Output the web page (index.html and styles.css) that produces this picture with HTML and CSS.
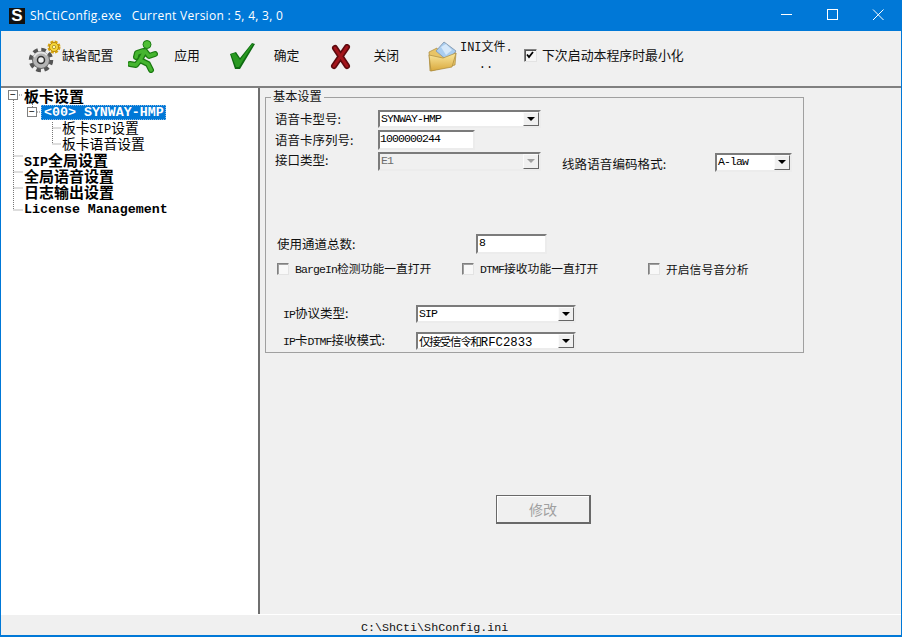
FILE: index.html
```html
<!DOCTYPE html>
<html lang="zh">
<head>
<meta charset="utf-8">
<title>ShCtiConfig.exe</title>
<link rel="stylesheet" href="styles.css">
</head>
<body>
<div class="window">
  <header class="titlebar">
    <span class="app-icon">S</span>
    <span class="title">ShCtiConfig.exe &nbsp;&nbsp;Current Version : 5, 4, 3, 0</span>
    <span class="controls">
      <svg class="ctl" width="46" height="31" viewBox="0 0 46 31"><path d="M17 14.500h11" stroke="#fff" fill="none"/></svg>
      <svg class="ctl" width="46" height="31" viewBox="0 0 46 31"><rect x="17.500" y="9.500" width="10" height="10" stroke="#fff" fill="none"/></svg>
      <svg class="ctl" width="46" height="31" viewBox="0 0 46 31"><path d="M17 9.500l10.500 10.500M27.500 9.500L17 20" stroke="#fff" fill="none"/></svg>
    </span>
  </header>

  <div class="toolbar">
    <div class="tool tool-default">
      <svg width="34" height="34" viewBox="0 0 34 34" class="icon">
        <circle cx="14" cy="20" r="10" fill="none" stroke="#555" stroke-width="4.500" stroke-dasharray="4.500 3.350"/>
        <circle cx="14" cy="20" r="8.500" fill="#b4b4b4" stroke="#666"/>
        <path d="M7 17a8 8 0 0 1 13-2" fill="none" stroke="#e4e4e4" stroke-width="2"/>
        <circle cx="14" cy="20" r="3.500" fill="#f0f0f0" stroke="#333" stroke-width="1.500"/>
        <circle cx="27" cy="7" r="5" fill="none" stroke="#d7a40e" stroke-width="3" stroke-dasharray="2.700 1.230"/>
        <circle cx="27" cy="7" r="4.500" fill="#f6d73a" stroke="#b8860b"/>
        <circle cx="27" cy="7" r="1.700" fill="#fff5b0" stroke="#8a6a00" stroke-width=".6"/>
      </svg>
      <span class="tool-label">缺省配置</span>
    </div>
    <div class="tool tool-apply">
      <svg width="31" height="33" viewBox="0 0 31 33" class="icon">
        <g fill="none" stroke="#1b7a12" stroke-width="6" stroke-linecap="round" stroke-linejoin="round">
          <path d="M17 11l-5 9 8 4 3 6M12 20l-4 5-6-1M15 11l-6 2-1 4M17 11l4 5 6-2"/>
        </g>
        <g fill="none" stroke="#45b52f" stroke-width="3.500" stroke-linecap="round" stroke-linejoin="round">
          <path d="M17 11l-5 9 8 4 3 6M12 20l-4 5-6-1M15 11l-6 2-1 4M17 11l4 5 6-2"/>
        </g>
        <circle cx="19" cy="4.500" r="4" fill="#4fbf35" stroke="#1b7a12"/>
      </svg>
      <span class="tool-label">应用</span>
    </div>
    <div class="tool tool-ok">
      <svg width="26" height="27" viewBox="0 0 26 27" class="icon">
        <path d="M0 11l6-2 4 6L22 0l3 1L10 26H5z" fill="#0f6b12"/>
        <path d="M1 11l4-1 5 7L22 1l1 .5L9 24H6z" fill="#2a9a22"/>
      </svg>
      <span class="tool-label">确定</span>
    </div>
    <div class="tool tool-close">
      <svg width="22" height="26" viewBox="0 0 22 26" class="icon">
        <path d="M5 4l12 18M17 3L4 22" fill="none" stroke="#5d0a0e" stroke-width="6" stroke-linecap="round"/>
        <path d="M5 4l12 18M17 3L4 22" fill="none" stroke="#a3141b" stroke-width="3" stroke-linecap="round"/>
      </svg>
      <span class="tool-label">关闭</span>
    </div>
    <div class="tool tool-ini">
      <svg width="29" height="31" viewBox="0 0 29 31" class="icon">
        <defs>
          <linearGradient id="flap" x1="0" y1="0" x2="0" y2="1"><stop offset="0" stop-color="#fbe9a0"/><stop offset="1" stop-color="#d9a83c"/></linearGradient>
        </defs>
        <path d="M1 11l8-4 1 3 18 2-1 12-25 6z" fill="#e8c466" stroke="#a98a3c" stroke-width=".7"/>
        <path d="M8 10L16 1l12 9-8 10z" fill="#a9cdf0" stroke="#8a9fb5"/>
        <path d="M13 6l5-3 6 6-6 5z" fill="#d5e8fa"/>
        <path d="M1 14l14 3 13-5-4 14L3 30z" fill="url(#flap)" stroke="#a98a3c" stroke-width=".7"/>
      </svg>
      <span class="tool-label ini-label">INI文件.<br>..</span>
    </div>
    <div class="tool-check">
      <span class="check checked"><svg width="8" height="8" viewBox="0 0 8 8"><path d="M1 3.500l2 2.500 4-5" fill="none" stroke="#000" stroke-width="1.800"/></svg></span>
      <span class="check-text">下次启动本程序时最小化</span>
    </div>
  </div>

  <main class="content">
    <nav class="tree">
      <svg class="tree-lines" width="180" height="130" viewBox="0 0 180 130">
        <path d="M12.500 12V122M12.500 68H22M12.500 84H22M12.500 100H22M12.500 122H22M18 7H22M31.500 12V24M36 24H40M51.500 34V56M51.500 40H60M51.500 56H60" fill="none" stroke="#777" stroke-dasharray="1 1"/>
      </svg>
      <div class="row row-root"><span class="box box-a">−</span><span class="cn-b">板卡设置</span></div>
      <div class="row row-card"><span class="box box-b">−</span><span class="selected">&lt;00&gt; SYNWAY-HMP</span></div>
      <div class="row row-child"><span class="cn">板卡</span>SIP<span class="cn">设置</span></div>
      <div class="row row-child"><span class="cn">板卡语音设置</span></div>
      <div class="row row-root">SIP<span class="cn-b">全局设置</span></div>
      <div class="row row-root"><span class="cn-b">全局语音设置</span></div>
      <div class="row row-root"><span class="cn-b">日志输出设置</span></div>
      <div class="row row-root row-last">License Management</div>
    </nav>

    <section class="panel">
      <div class="group">
        <div class="legend">基本设置</div>
        <div class="f-row f-r1">
          <span class="f-label l-card">语音卡型号:</span>
          <div class="combo c-wide"><span class="val">SYNWAY-HMP</span><span class="arrow"></span></div>
        </div>
        <div class="f-row f-r2">
          <span class="f-label l-card">语音卡序列号:</span>
          <div class="edit e-serial">1000000244</div>
        </div>
        <div class="f-row f-r3">
          <span class="f-label l-card">接口类型:</span>
          <div class="combo c-wide disabled"><span class="val">E1</span><span class="arrow"></span></div>
          <span class="f-label l-codec">线路语音编码格式:</span>
          <div class="combo c-law"><span class="val">A-law</span><span class="arrow"></span></div>
        </div>
        <div class="f-row f-r4">
          <span class="f-label l-chan">使用通道总数:</span>
          <div class="edit e-chan">8</div>
        </div>
        <div class="f-row f-r5">
          <div class="opt o1"><span class="check"></span><span class="opt-text"><span class="lat">BargeIn</span>检测功能一直打开</span></div>
          <div class="opt o2"><span class="check"></span><span class="opt-text"><span class="lat">DTMF</span>接收功能一直打开</span></div>
          <div class="opt"><span class="check"></span><span class="opt-text">开启信号音分析</span></div>
        </div>
        <div class="f-row f-r6">
          <span class="f-label l-ip"><span class="lat">IP</span>协议类型:</span>
          <div class="combo c-ip"><span class="val">SIP</span><span class="arrow"></span></div>
        </div>
        <div class="f-row f-r7">
          <span class="f-label l-ip"><span class="lat">IP</span>卡<span class="lat">DTMF</span>接收模式:</span>
          <div class="combo c-ip"><span class="val"><span class="val-cn">仅接受信令和</span><span class="val-rfc">RFC2833</span></span><span class="arrow"></span></div>
        </div>
      </div>
      <div class="modify">修改</div>
    </section>
  </main>

  <footer class="status">C:\ShCti\ShConfig.ini</footer>
</div>
</body>
</html>
```
FILE: styles.css
```css
* { box-sizing: border-box; }
html, body { margin: 0; padding: 0; }
body { background: #f0f0f0; }
.window {
  width: 902px; height: 637px; display: flex; flex-direction: column;
  background: #f0f0f0; border: 1px solid #0078d7; border-top: 0; border-bottom: 2px solid #0078d7;
  font-family: "Noto Sans CJK SC", "Liberation Sans", sans-serif; font-size: 12px; color: #111; overflow: hidden;
}
.titlebar {
  height: 31px; flex: none; margin: 0 -1px; background: #0078d7; color: #fff;
  display: flex; align-items: center; padding-left: 9px;
  font-family: "Open Sans", "Noto Sans", sans-serif; font-size: 12px;
}
.app-icon {
  width: 16px; height: 16px; background: #111; color: #fff; font: bold 17px/16px "Liberation Sans", sans-serif;
  text-align: center; margin-right: 5px;
}
.title { white-space: pre; letter-spacing: .27px; }
.controls { margin-left: auto; display: flex; height: 31px; }
.ctl { display: block; }

.toolbar { height: 57px; flex: none; display: flex; align-items: flex-start; border-bottom: 2px solid #808080; padding-left: 26px; }
.tool { display: flex; align-items: center; height: 33px; margin-top: 9px; }
.icon { display: block; flex: none; }
.tool-label { font-size: 12.800px; line-height: 16px; white-space: nowrap; padding-bottom: 3px; }
.tool-default .tool-label { margin-left: 1px; }
.tool-apply { margin-left: 15px; }
.tool-apply .tool-label { margin-left: 15px; }
.tool-ok { margin-left: 30px; }
.tool-ok .tool-label { margin-left: 18px; }
.tool-close { margin-left: 31px; }
.tool-close .tool-label { margin-left: 21px; }
.tool-ini { margin-left: 29px; }
.ini-label { font-family: "Liberation Mono", "Noto Sans CJK SC", monospace; margin-left: 3px; font-size: 12px; text-align: center; line-height: 17px; width: 52px; padding-bottom: 0; }
.tool-check { display: flex; align-items: center; margin: 16px 0 0 12px; }
.check-text { margin-left: 5px; font-size: 12.900px; line-height: 16px; }
.check {
  width: 13px; height: 13px; flex: none; background: #fff; display: flex; align-items: center; justify-content: center;
  border: 1px solid; border-color: #808080 #e3e3e3 #e3e3e3 #808080;
}
.checked { background: #f6f6f6; box-shadow: inset 1px 1px 0 #555; }

.content { flex: 1; display: flex; min-height: 0; }
.tree {
  width: 257px; flex: none; background: #fff; padding: 0; position: relative;
  font-family: "Liberation Mono", "Noto Sans CJK SC", monospace; font-size: 13.300px; font-weight: bold; color: #000;
}
.tree-lines { position: absolute; left: 0; top: 0; }
.row { height: 16px; line-height: 16px; white-space: pre; position: relative; overflow: visible; }
.row-root { padding-left: 23px; }
.row-card { padding-left: 40px; }
.row-child { padding-left: 61px; font-weight: normal; font-size: 12px; line-height: 14px; }
.row-last { padding-top: 2px; }
.cn-b { font-family: "Noto Sans CJK SC", sans-serif; font-size: 15px; font-weight: 700; line-height: 16px; }
.cn { font-family: "Noto Sans CJK SC", sans-serif; font-size: 13.800px; font-weight: 400; line-height: 14px; }
.box {
  position: absolute; width: 10px; height: 10px; background: #fff; border: 1px solid #808080; color: #000;
  font: 10px/7px "Liberation Sans", sans-serif; text-align: center;
}
.box-a { left: 7px; top: 2px; }
.box-b { left: 26px; top: 3px; }
.selected { display: inline-block; margin-top: 1px; background: #0078d7; color: #fff; padding: 0 2px 0 3px; height: 15px; line-height: 15px; outline: 1px dotted #7fb6e6; outline-offset: -1px; }

.panel { flex: 1; border-left: 2px solid #6f6f6f; padding: 9px 0 0 5px; }
.group {
  width: 539px; height: 256px; border: 1px solid #a0a0a0; position: relative; padding: 12px 0 0 9px;
  font-size: 12.500px;
}
.legend { position: absolute; left: 5px; top: -10px; background: #f0f0f0; padding: 0 2px; font-size: 12.200px; line-height: 17px; }
.f-row { display: flex; align-items: center; }
.f-label { line-height: 16px; white-space: nowrap; }
.lat { font-family: "Liberation Mono", monospace; font-size: 11.500px; letter-spacing: -.9px; }
.f-r1 { height: 18px; }
.f-r2 { height: 20px; margin-top: 2px; }
.f-r3 { height: 20px; margin-top: 2px; align-items: flex-start; }
.f-r4 { height: 20px; margin-top: 62px; }
.f-r5 { height: 14px; margin-top: 8px; padding-left: 2px; }
.f-r6 { height: 19px; margin-top: 28px; padding-left: 8px; }
.f-r7 { height: 19px; margin-top: 8px; padding-left: 8px; }
.l-card { width: 103px; flex: none; }
.l-codec { margin-left: 21px; width: 153px; flex: none; padding-top: 4px; letter-spacing: .1px; }
.l-chan { width: 201px; flex: none; padding-left: 2px; }
.l-ip { width: 133px; flex: none; }

.combo {
  display: flex; align-items: stretch; justify-content: space-between; background: #fff;
  border: 2px solid; border-color: #7b7b7b #ececec #ececec #7b7b7b;
  height: 18px; font-family: "Liberation Mono", "Noto Sans CJK SC", monospace; color: #000;
}
.val { padding-left: 1px; line-height: 14px; white-space: nowrap; font-size: 11.500px; letter-spacing: -.9px; }
.val-cn { font-family: "Noto Sans CJK SC", sans-serif; font-size: 11.500px; letter-spacing: -1.200px; }
.val-rfc { font-size: 12.300px; letter-spacing: 0; }
.arrow {
  width: 16px; flex: none; background: #f0f0f0; position: relative;
  border: 1px solid; border-color: #fbfbfb #666 #666 #fbfbfb;
}
.arrow::after {
  content: ""; position: absolute; left: 3px; top: 4px; border: 4px solid transparent; border-top-color: #000; border-bottom: 0;
}
.c-wide { width: 163px; }
.c-law { width: 77px; height: 19px; margin-top: 1px; }
.c-ip { width: 160px; }
.disabled { background: #f0f0f0; color: #6d6d6d; height: 19px; }
.disabled .arrow::after { border-top-color: #a0a0a0; }
.edit {
  background: #fff; border: 2px solid; border-color: #7b7b7b #ececec #ececec #7b7b7b; height: 20px;
  font-family: "Liberation Mono", monospace; font-size: 11.500px; letter-spacing: -.9px; line-height: 14px; color: #000;
}
.e-serial { width: 97px; }
.e-chan { width: 71px; padding-left: 1px; }
.opt { display: flex; align-items: center; }
.opt .check { width: 12px; height: 12px; background: #f8f8f8; box-shadow: inset 1px 1px 0 #a0a0a0; }
.opt-text { margin-left: 6px; font-size: 11.800px; line-height: 14px; white-space: nowrap; }
.o1 { width: 185px; }
.o2 { width: 186px; }
.modify {
  width: 95px; height: 29px; margin: 142px 0 0 231px; border: 1px solid #696969;
  border-right-width: 2px; border-bottom-width: 2px; background: #f0f0f0; box-shadow: inset 1px 1px 0 #fff;
  color: #a0a0a0; font-size: 14px; line-height: 26px; text-align: center;
}
.status {
  height: 21px; flex: none; padding-left: 360px; line-height: 27px; background: #f0f0f0;
  font-family: "Liberation Mono", monospace; font-size: 11.700px; color: #111; border-top: 1px solid #fff;
}
```
